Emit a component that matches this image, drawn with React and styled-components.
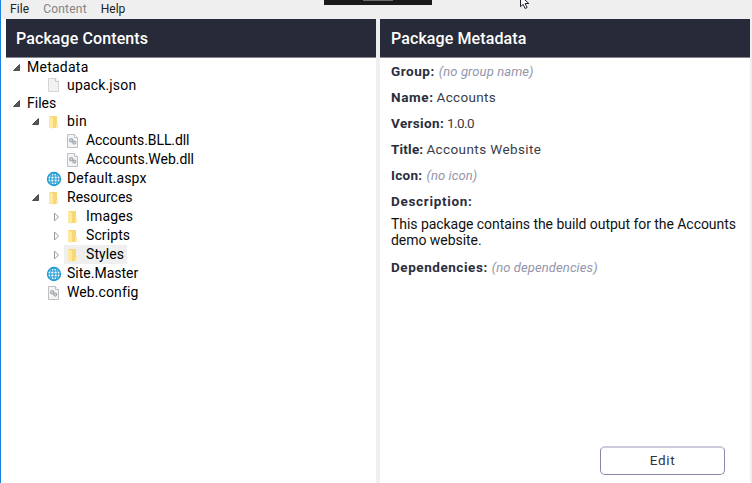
import React from "react";
import styled, { createGlobalStyle } from "styled-components";

const GlobalStyle = createGlobalStyle`
  * { box-sizing: border-box; }
  body { margin: 0; overflow: hidden; background: #efefef; font-family: Roboto, "Liberation Sans", sans-serif; }
`;
const Window = styled.div`
  position: relative;
  width: 752px;
  height: 483px;
  display: flex;
  flex-direction: column;
  overflow: hidden;
  border-left: 1px solid #1a82d8;
  white-space: nowrap;
`;
const MenuBar = styled.nav`
  height: 19px;
  flex: none;
  display: flex;
  gap: 14px;
  padding-left: 9px;
`;
const MenuItem = styled.span`
  font-size: 12px;
  line-height: 19px;
  letter-spacing: ${(p) => p.$track || 0}px;
  color: ${(p) => (p.$disabled ? "#848484" : "#222")};
`;
const CaptureBar = styled.div`
  position: absolute;
  left: 323px;
  top: 0;
  width: 108px;
  height: 5px;
  background: #1a1a1a;
  display: flex;
  justify-content: center;
`;
const CaptureHandle = styled.div`
  width: 30px;
  height: 1px;
  background: #6b6b6b;
`;
const Cursor = styled.svg`
  position: absolute;
  left: 518px;
  top: 0;
`;
const Panels = styled.main`
  flex: 1;
  display: grid;
  grid-template-columns: 370px 4px 370px;
  padding: 0 2px 0 5px;
  background: linear-gradient(#fff, #fff) left / 5px 100% no-repeat;
`;
const Panel = styled.section`
  display: flex;
  flex-direction: column;
  background: #fff;
`;
const PanelHeader = styled.h1`
  margin: 0;
  height: 39px;
  padding-left: ${(p) => p.$inset}px;
  border-bottom: 1px solid #85858f;
  background: #272a39;
  color: #fff;
  font-size: 16px;
  font-weight: 500;
  line-height: 40px;
  letter-spacing: 0.1px;
`;
const Tree = styled.ul`
  list-style: none;
  margin: 0;
  padding: 0 0 0 5px;
`;
const TreeRow = styled.li`
  display: flex;
  align-items: center;
  height: ${(p) => p.$height}px;
  padding-left: ${(p) => p.$depth * 19}px;
`;
const ToggleSlot = styled.span`
  width: 15px;
  height: 18px;
  display: flex;
  align-items: center;
  padding-left: ${(p) => (p.$open ? 2 : 5)}px;
`;
const Entry = styled.span`
  display: flex;
  align-items: flex-start;
  height: 100%;
  padding-right: 3px;
  background: ${(p) => (p.$selected ? "#efefef" : "transparent")};
`;
const IconSlot = styled.span`
  width: 20px;
  height: 100%;
  margin-right: 2px;
  display: flex;
  align-items: center;
`;
const TreeLabel = styled.span`
  margin-left: ${(p) => (p.$bare ? 1 : 0)}px;
  color: #000;
  font-size: 14px;
  line-height: 18px;
  letter-spacing: ${(p) => p.$track}px;
`;
const Details = styled.div`
  padding: 0 0 0 11px;
`;
const Field = styled.div`
  display: flex;
  height: 26px;
  line-height: 27px;
  gap: 3px;
`;
const FieldLabel = styled.strong`
  color: #2b2e3c;
  font-size: 13.5px;
  font-weight: 700;
  letter-spacing: ${(p) => p.$track}px;
`;
const FieldValue = styled.span`
  color: #3a3c48;
  font-size: 13.5px;
  letter-spacing: ${(p) => p.$track || 0}px;
`;
const EmptyValue = styled.em`
  margin-left: 1px;
  color: #9495aa;
  font-size: 13px;
  letter-spacing: 0.1px;
`;
const Description = styled.p`
  margin: 2px 0 6px;
  color: #111;
  font-size: 14px;
  line-height: 16px;
  letter-spacing: -0.05px;
`;
const Actions = styled.footer`
  margin-top: auto;
  display: flex;
  justify-content: flex-end;
  padding: 0 25px 8px 0;
`;
const EditButton = styled.button`
  width: 125px;
  height: 29px;
  padding: 0 0 1px;
  border: 1px solid #8587a9;
  border-top: 2px solid #cccbdc;
  border-radius: 5px;
  background: #fff;
  color: #30323f;
  font: 13.5px/25px Roboto, sans-serif;
  letter-spacing: 0.7px;
`;

const Toggle = ({ open }) =>
  open ? (
    <svg width="7" height="7" viewBox="0 0 7 7">
      <path d="M6.5.5v6H.5z" fill="#595959" stroke="#333" strokeWidth=".8" />
    </svg>
  ) : (
    <svg width="7" height="10" viewBox="0 0 7 10">
      <path d="M.5 1v8l4-4z" fill="#fff" stroke="#9a9a9a" />
    </svg>
  );

const icons = {
  file: (
    <svg width="18" height="16" viewBox="0 0 18 16">
      <path d="M3.5 1.5h7l3 3v10h-10z" fill="#f2f2f2" stroke="#d5d5d5" />
      <path d="M10.5 1.5v3h3" fill="#fff" stroke="#c6c6c6" />
    </svg>
  ),
  folder: (
    <svg width="18" height="16" viewBox="0 0 18 16">
      <path d="M4 2h8v7l1 1v4H4z" fill="#f8d775" />
      <path d="M4 2l4 2v11l-4-2z" fill="#ffe8a2" />
      <path d="M11 10h2v4h-2z" fill="#ffe8a2" />
    </svg>
  ),
  gears: (
    <svg width="18" height="16" viewBox="0 0 18 16">
      <path d="M3.5 1.5h7l3 3v10h-10z" fill="#f3f4f5" stroke="#bfbfbf" />
      <path d="M10.5 1.5v3h3" fill="#fff" stroke="#bdbdbd" />
      <circle cx="7.2" cy="7.3" r="1.6" fill="#d5d9dd" stroke="#a5abb2" strokeWidth="1.3" />
      <circle cx="10.3" cy="9.6" r="1.5" fill="#d5d9dd" stroke="#a5abb2" strokeWidth="1.3" />
    </svg>
  ),
  globe: (
    <svg width="18" height="16" viewBox="0 0 18 16">
      <g fill="none" stroke="#1b98d1" strokeWidth="1.1">
        <circle cx="9" cy="8" r="6.4" fill="#fff" strokeWidth="1.5" />
        <ellipse cx="9" cy="8" rx="3.3" ry="6.4" />
        <path d="M9 1.5v13M2.5 8h13M3.7 5h10.6M3.7 11h10.6" />
      </g>
    </svg>
  ),
};

const nodes = [
  { name: "Metadata", depth: 0, open: true, track: 0.25, height: 18 },
  { name: "upack.json", depth: 1, icon: "file", track: 0.17, height: 18 },
  { name: "Files", depth: 0, open: true, track: 0, height: 18 },
  { name: "bin", depth: 1, open: true, icon: "folder", track: 0.4 },
  { name: "Accounts.BLL.dll", depth: 2, icon: "gears", track: -0.1 },
  { name: "Accounts.Web.dll", depth: 2, icon: "gears", track: -0.04 },
  { name: "Default.aspx", depth: 1, icon: "globe", track: 0.12 },
  { name: "Resources", depth: 1, open: true, icon: "folder", track: 0 },
  { name: "Images", depth: 2, open: false, icon: "folder", track: 0.15 },
  { name: "Scripts", depth: 2, open: false, icon: "folder", track: 0.1 },
  { name: "Styles", depth: 2, open: false, icon: "folder", track: 0.1, selected: true },
  { name: "Site.Master", depth: 1, icon: "globe", track: 0 },
  { name: "Web.config", depth: 1, icon: "gears", track: 0.1 },
];

const fields = [
  { label: "Group:", track: 0.55, empty: "(no group name)" },
  { label: "Name:", track: 0.6, value: "Accounts", valueTrack: 0.33 },
  { label: "Version:", track: 0.35, value: "1.0.0", valueTrack: -0.6 },
  { label: "Title:", track: 0.2, value: "Accounts Website", valueTrack: 0.4 },
  { label: "Icon:", track: 0.3, empty: "(no icon)" },
  { label: "Description:", track: 0.68 },
];

const MetadataField = ({ label, track, value, valueTrack, empty }) => (
  <Field>
    <FieldLabel $track={track}>{label}</FieldLabel>
    {value && <FieldValue $track={valueTrack}>{value}</FieldValue>}
    {empty && <EmptyValue>{empty}</EmptyValue>}
  </Field>
);

export default function App() {
  return (
    <Window>
      <GlobalStyle />
      <MenuBar>
        <MenuItem $track={0.1}>File</MenuItem>
        <MenuItem $track={0.2} $disabled>Content</MenuItem>
        <MenuItem>Help</MenuItem>
      </MenuBar>
      <Panels>
        <Panel>
          <PanelHeader $inset={10}>Package Contents</PanelHeader>
          <Tree>
            {nodes.map((n) => (
              <TreeRow key={n.name} $depth={n.depth} $height={n.height || 19}>
                <ToggleSlot $open={n.open}>{n.open !== undefined && <Toggle open={n.open} />}</ToggleSlot>
                <Entry $selected={n.selected}>
                  {n.icon && <IconSlot>{icons[n.icon]}</IconSlot>}
                  <TreeLabel $bare={!n.icon} $track={n.track}>{n.name}</TreeLabel>
                </Entry>
              </TreeRow>
            ))}
          </Tree>
        </Panel>
        <span />
        <Panel>
          <PanelHeader $inset={11}>Package Metadata</PanelHeader>
          <Details>
            {fields.map((f) => <MetadataField key={f.label} {...f} />)}
            <Description>
              This package contains the build output for the Accounts<br />
              demo website.
            </Description>
            <MetadataField label="Dependencies:" track={0.55} empty="(no dependencies)" />
          </Details>
          <Actions><EditButton>Edit</EditButton></Actions>
        </Panel>
      </Panels>
      <CaptureBar><CaptureHandle /></CaptureBar>
      <Cursor width="12" height="11" viewBox="0 0 12 11">
        <path d="M1.5-4v10.7l2.6-2.4 2 4.2 2-1-2-4h3.8z" fill="#fff" stroke="#20202a" />
      </Cursor>
    </Window>
  );
}
